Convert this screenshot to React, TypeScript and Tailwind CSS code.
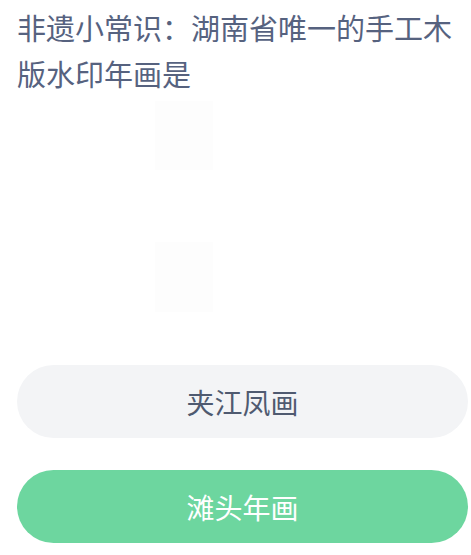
export default function App() {
  const font = { fontFamily: '"Noto Sans CJK SC", "Noto Sans", sans-serif' };
  return (
    <div className="w-[471px] h-[555px] bg-white overflow-hidden" style={font}>
      <div className="pl-[17px] pr-[10px] pt-[4px] text-[29px] leading-[46px] text-[#56627f]">
        非遗小常识：湖南省唯一的手工木版水印年画是
      </div>
      <div className="flex flex-col items-start pl-[155px] mt-[5px] gap-[72px]">
        <div className="w-[58px] h-[69px] bg-[#fdfdfd]" />
        <div className="w-[58px] h-[70px] bg-[#fdfdfd]" />
      </div>
      <div className="flex flex-col pl-[17px] mt-[53px] gap-[32px]">
        <div className="w-[451px] h-[73px] rounded-full bg-[#f3f4f6] flex items-center justify-center text-[28px] text-[#4f5a70]">
          夹江凤画
        </div>
        <div className="w-[451px] h-[73px] rounded-full bg-[#6dd69f] flex items-center justify-center text-[28px] text-white">
          滩头年画
        </div>
      </div>
    </div>
  );
}
